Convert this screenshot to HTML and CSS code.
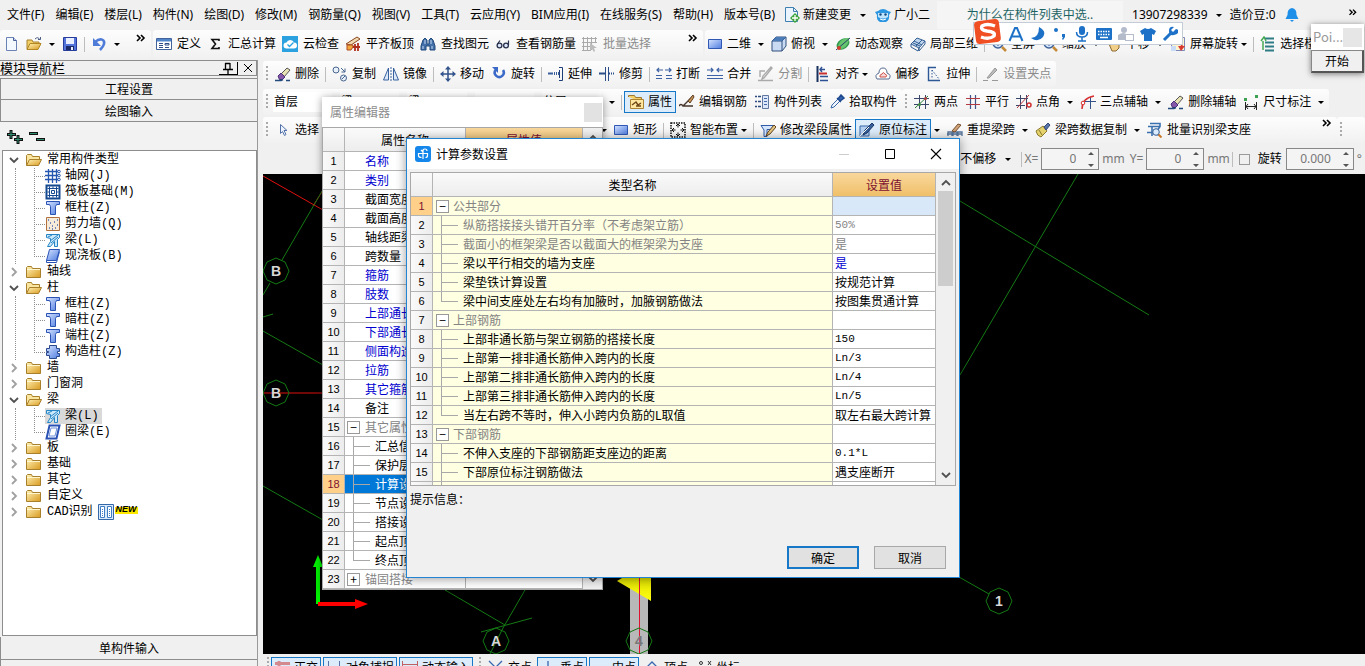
FILE: index.html
```html
<!DOCTYPE html>
<html lang="zh-CN">
<head>
<meta charset="utf-8">
<title>计算参数设置</title>
<link rel="stylesheet" href="styles.css">
</head>
<body>
<svg class="defs" aria-hidden="true">
<defs>
<linearGradient id="gGold" x1="0" y1="0" x2="1" y2="1"><stop offset="0" stop-color="#fff3b8"/><stop offset="1" stop-color="#d99a20"/></linearGradient>
<linearGradient id="gBlue" x1="0" y1="0" x2="1" y2="1"><stop offset="0" stop-color="#d4e3ff"/><stop offset="1" stop-color="#4f7ce0"/></linearGradient>
<linearGradient id="gYel" x1="0" y1="0" x2="0" y2="1"><stop offset="0" stop-color="#dcdc00"/><stop offset="1" stop-color="#ffff10"/></linearGradient>
</defs>
<symbol id="caret" viewBox="0 0 6 16"><path d="M0 7h6L3 10z" fill="#000"/></symbol>
<symbol id="more" viewBox="0 0 10 16"><path d="M1 3l3 3-3 3M5 3l3 3-3 3" fill="none" stroke="#000" stroke-width="1.6"/></symbol>
<symbol id="new" viewBox="0 0 16 16"><path d="M3.500 1.500h7l3 3v10h-10z" fill="#f4f8ff" stroke="#6a82b4"/><path d="M10.500 1.500v3h3" fill="#c5d4f0" stroke="#4a5f96"/></symbol>
<symbol id="open" viewBox="0 0 16 16"><path d="M1 13V4h5l1 2h6v2" fill="#f3cf68" stroke="#a8812c"/><path d="M1 13.500l3-6h11l-3 6z" fill="url(#gGold)" stroke="#b38622"/><path d="M9 3q3-3 5 1M12 3.500h2.500V1" fill="none" stroke="#4b5f86"/></symbol>
<symbol id="save" viewBox="0 0 16 16"><path d="M1.500 1.500h13v13h-13z" fill="#5474dc" stroke="#283c9c"/><path d="M4 2h8v6H4z" fill="#e9efff"/><path d="M4 10h8v4H4z" fill="#1c2a68"/><path d="M9 11h2v3H9z" fill="#e9efff"/></symbol>
<symbol id="undo" viewBox="0 0 16 16"><path d="M4 6c6-5 10-2 9 2-.5 2-2 4-4 6" fill="none" stroke="#4f7cd8" stroke-width="2.600"/><path d="M2 2v8h8z" fill="#4f7cd8"/></symbol>
<symbol id="define" viewBox="0 0 16 16"><path d="M.5 2.500h15v11H.5z" fill="#fff" stroke="#40639c"/><path d="M1 3h14v2.500H1z" fill="#4f84c8"/><path d="M3 7.500h4M3 9.500h4M3 11.500h4M9 7.500h4v1.500H9zM9 11.500h4" fill="none" stroke="#304f88"/></symbol>
<symbol id="sigma" viewBox="0 0 16 16"><path d="M12 5V3.500H5l3.500 4.500L5 12.500h7V11" fill="none" stroke="#111" stroke-width="1.600"/></symbol>
<symbol id="cloud" viewBox="0 0 16 16"><path d="M0 0h16v16H0z" fill="#2ba1e0"/><path d="M4.500 12.500a3 3 0 0 1 0-6 4 4 0 0 1 7.500 0 3 3 0 0 1 0 6z" fill="#fff"/><path d="M5.500 8.500l2 2 4-4" fill="none" stroke="#2ba1e0" stroke-width="1.300"/></symbol>
<symbol id="slab" viewBox="0 0 16 16"><path d="M1 8L12 1l3 2-9 6z" fill="#f0d8b0" stroke="#8a4620"/><path d="M2 9h6v2l-2 3H2z" fill="#f2a83c" stroke="#b04a20"/><path d="M8 11h7M10 8v7M13 7v8" stroke="#b03020" stroke-width="1.800"/></symbol>
<symbol id="find" viewBox="0 0 16 16"><path d="M3 4l2-2 2 2v4h2V4l2-2 2 2 2 6v4h-5v-4H6v4H1v-4z" fill="#426fa8" stroke="#234a7c"/><path d="M3 10v3M12 10v3M5 4v4M11 4v4" stroke="#c8dcf5"/></symbol>
<symbol id="glasses" viewBox="0 0 16 16"><circle cx="4.500" cy="9.500" r="2.400" fill="#dce6f8" stroke="#28324c" stroke-width="1.300"/><circle cx="11" cy="9.500" r="2.400" fill="#dce6f8" stroke="#28324c" stroke-width="1.300"/><path d="M2.500 8L5 4.500M13.500 9V4.500" stroke="#28324c" stroke-width="1.200"/></symbol>
<symbol id="batch" viewBox="0 0 16 16"><path d="M1.500 1v13M5.500 1v13M9.500 1v13M13.500 1v5M0 2.500h15M0 6.500h15M0 10.500h9M0 14.500h9" stroke="#aaa" fill="none"/><path d="M8 7v8l2-2 2 3 1-1-1-3h3z" fill="#bbb"/></symbol>
<symbol id="rect" viewBox="0 0 16 16"><path d="M1.500 3.500h13v9h-13z" fill="url(#gBlue)" stroke="#3057b4"/></symbol>
<symbol id="cube" viewBox="0 0 16 16"><path d="M1 5l4-4h10v9l-4 5H1z" fill="#c9daf3" stroke="#2e4f7c"/><path d="M1 5h10v10M11 5l4-4" fill="none" stroke="#2e4f7c"/><path d="M1 5l4-4h10l-4 4z" fill="#4c7cb8"/></symbol>
<symbol id="orbit" viewBox="0 0 16 16"><ellipse cx="8" cy="8" rx="7" ry="5" transform="rotate(-35 8 8)" fill="#2f9a4c"/><path d="M3 10C5 3 10 2 14 2 14 7 11 12 6 13" fill="#67c46e"/><path d="M1 14L15 2" stroke="#26426c"/><circle cx="4" cy="12" r="2" fill="#d04030"/></symbol>
<symbol id="local" viewBox="0 0 16 16"><path d="M1 8l6-6 8 3-6 7z" fill="#bcd4ee" stroke="#345f92"/><path d="M1 8v3l7 4 1-3M9 12v3l6-7V5M4 5l8 4M6 10l6-6M3 7l7 3" fill="none" stroke="#345f92"/></symbol>
<symbol id="zoom" viewBox="0 0 16 16"><circle cx="7" cy="7" r="5" fill="#cfe3fa" stroke="#3d6199" stroke-width="1.500"/><path d="M11 11l4 4" stroke="#c58a38" stroke-width="2.500"/><path d="M4 7h6M7 4v6" stroke="#3d6199"/></symbol>
<symbol id="hand" viewBox="0 0 16 16"><path d="M3 8l2 1V4q1-2 2 0 1-3 2 0 1-2 2 1 2-1 2 2v5l-3 3H6z" fill="#f2cf88" stroke="#8c6a30"/></symbol>
<symbol id="screen" viewBox="0 0 16 16"><path d="M1.500 1.500h13v13h-13z" fill="#fdf3ce" stroke="#7c89b8"/><path d="M4 4q8-1 8 7" fill="none" stroke="#d83a30" stroke-width="2"/><path d="M8 10h7l-4 5z" fill="#d83a30"/><path d="M1 10h5v5H1z" fill="#c8dcf8"/></symbol>
<symbol id="layers" viewBox="0 0 16 16"><path d="M5 2.500h9M5 6.500h9M5 10.500h9M5 14.500h9" stroke="#2d7c86" stroke-width="2"/><path d="M1 5l3-4 2 4M3 5v9" stroke="#45a854" fill="none" stroke-width="1.500"/></symbol>
<symbol id="erase" viewBox="0 0 16 16"><path d="M6 8l6-6 3 2-6 7z" fill="#e9e3b4" stroke="#555"/><path d="M3 10l3-3 4 4-3 3q-3 1-4-4z" fill="#8557a8" stroke="#4c3078"/><path d="M0 14.500h6l2-1M11 14.500h4" stroke="#234a7c" stroke-width="1.400"/></symbol>
<symbol id="copy" viewBox="0 0 16 16"><circle cx="4" cy="4" r="3" fill="#e8f0fa" stroke="#48658e"/><circle cx="11.500" cy="12" r="3" fill="#e8f0fa" stroke="#48658e"/><path d="M9 2l4 4M13 2.500V6H9.500M10 13l3-3" fill="none" stroke="#48658e"/></symbol>
<symbol id="mirror" viewBox="0 0 16 16"><path d="M5.500 2v12H.5zM10.500 2v12h5z" fill="#dce9f8" stroke="#3a62a0"/><path d="M8 1v14" stroke="#3a62a0" stroke-dasharray="2 1"/></symbol>
<symbol id="move" viewBox="0 0 16 16"><path d="M8 2v12M2 8h12" stroke="#32538c" stroke-width="1.500"/><path d="M8 0l3 3.500H5zM8 16l3-3.500H5zM0 8l3.500-3v6zM16 8l-3.500-3v6z" fill="#32538c"/></symbol>
<symbol id="rot" viewBox="0 0 16 16"><path d="M4.500 4a4.500 4.500 0 1 0 7.500 0" fill="none" stroke="#3c6ac8" stroke-width="2.600"/><path d="M1 1h6v6z" fill="#3c6ac8"/></symbol>
<symbol id="extend" viewBox="0 0 16 16"><path d="M0 7.500h5" stroke="#3a5f9c" stroke-width="2"/><path d="M6 7.500h5" stroke="#3a5f9c" stroke-width="3" stroke-dasharray="1 1"/><path d="M11 1.500h3.500v13H11M11.500 4v8" fill="none" stroke="#1d3d78"/></symbol>
<symbol id="trim" viewBox="0 0 16 16"><path d="M0 7.500h6M10 7.500h1M12 7.500h1M14 7.500h1" stroke="#2c4f8c" stroke-width="2"/><path d="M6.500 1v14M9.500 1v14" stroke="#2c4f8c"/></symbol>
<symbol id="brk" viewBox="0 0 16 16"><path d="M0 12.500h6M10 12.500h6M0 9.500h6M10 9.500h6" stroke="#3c61a4"/><path d="M7 4H1M3 2L1 4l2 2M9 4h6M13 2l2 2-2 2" fill="none" stroke="#3c61a4" stroke-width="1.200"/></symbol>
<symbol id="join" viewBox="0 0 16 16"><path d="M0 12.500h16M0 9.500h16" stroke="#3c61a4"/><path d="M0 4h6M4 2l2 2-2 2M16 4h-6M12 2l-2 2 2 2" fill="none" stroke="#3c61a4" stroke-width="1.200"/></symbol>
<symbol id="split" viewBox="0 0 16 16"><path d="M0 14.500h15M2 11V5h5M14 2L6 12l-2 1 1-3 8-9z" fill="none" stroke="#aaa" stroke-width="1.400"/></symbol>
<symbol id="align" viewBox="0 0 16 16"><path d="M2.500 0v16" stroke="#17305c" stroke-width="2"/><path d="M5 3.500h5M5 10.500h8M5 14.500h8M7 1L5 3.500 7 6" fill="none" stroke="#2d4f94" stroke-width="1.400"/><path d="M4 7.500h8" stroke="#c83030" stroke-width="2"/></symbol>
<symbol id="offset" viewBox="0 0 16 16"><path d="M2 13q-3-4 2-6 0-5 4-5 4 0 4 5 5 2 2 6z" fill="#fff" stroke="#566b90"/><path d="M5 11q-1-2 2-3 1-3 3 0 3 1 1 3z" fill="#f6dada" stroke="#cc5048"/></symbol>
<symbol id="stretch" viewBox="0 0 16 16"><path d="M10 1.500H2.500v13H14" fill="none" stroke="#2e5796" stroke-width="1.400"/><path d="M6 4l7 9M6 4v9" stroke="#2e5796" stroke-dasharray="1.500 1.500"/></symbol>
<symbol id="grip" viewBox="0 0 16 16"><path d="M0 14.500h5M9 14.500h6" stroke="#999"/><path d="M4 12L12 2l2 2-8 8z" fill="#bbb" stroke="#999"/></symbol>
<symbol id="prop" viewBox="0 0 16 16"><path d="M.5 3V1.500h6l1 2h6V8" fill="#f3cf68" stroke="#a07830"/><path d="M2.500 5.500h13v9h-13z" fill="#ffe7a0" stroke="#ac8332"/><path d="M4 11l4-3 2 3 3-2M8 12h5" fill="none" stroke="#704818" stroke-width="1.400"/></symbol>
<symbol id="rebar" viewBox="0 0 16 16"><path d="M0 12q2-3 4 0h10M4 12l10-10" fill="none" stroke="#47362c" stroke-width="1.400"/><path d="M9 7l5-6 1 2-4 6z" fill="#c9965c" stroke="#604020"/></symbol>
<symbol id="list" viewBox="0 0 16 16"><path d="M1 2.500h2M1 7.500h2M1 12.500h2M4 2.500h3M4 7.500h3M4 12.500h3" stroke="#2e4c80" stroke-width="1.600"/><path d="M8.500 1.500h6v13h-6z" fill="#dce8fa" stroke="#6077a0"/><path d="M10 4.500h3M10 7.500h3M10 10.500h3" stroke="#4569a8"/></symbol>
<symbol id="pick" viewBox="0 0 16 16"><path d="M2 14l1-3 6-6 2 2-6 6z" fill="#eff5ff" stroke="#3c68a8"/><path d="M8 4l4 4M9 5l3-4 3 3-4 3z" fill="#3465b0" stroke="#204a90" stroke-width="1.500"/></symbol>
<symbol id="ax2" viewBox="0 0 16 16"><path d="M5.500 1v14M11.500 1v14M0 4.500h15M0 10.500h15" stroke="#3b476a"/><path d="M1 14L14 2" stroke="#2e8038"/><circle cx="5.500" cy="10.500" r="1.500" fill="#3b8a40"/><circle cx="11.500" cy="4.500" r="1.500" fill="#b04040"/></symbol>
<symbol id="axp" viewBox="0 0 16 16"><path d="M5.500 1v14M10.500 1v14" stroke="#3b5588" stroke-width="1.200"/><path d="M1 4.500h14M1 10.500h14" stroke="#b33a40"/></symbol>
<symbol id="axa" viewBox="0 0 16 16"><path d="M4.500 1v14M10.500 1v14M0 4.500h12M0 11.500h9" stroke="#3b476a"/><path d="M1 14L13 1" stroke="#b33a40"/><circle cx="13" cy="11" r="2" fill="none" stroke="#d03030" stroke-width="1.500"/></symbol>
<symbol id="ax3" viewBox="0 0 16 16"><path d="M10.500 3v12M4 7.500h12" stroke="#33538a"/><path d="M2 15Q2 4 14 2" fill="none" stroke="#d83030" stroke-width="1.500"/><circle cx="3" cy="9" r="1.800" fill="#fff" stroke="#d83030"/></symbol>
<symbol id="dim" viewBox="0 0 16 16"><path d="M2.500 8v8M13.500 8v8M2 12.500h12M5 10l-2 2.500L5 15M11 10l2 2.500-2 2.500" fill="none" stroke="#222"/><path d="M1 4h3v3H1zM12 1h3v3h-3z" fill="#3ba050"/></symbol>
<symbol id="cursor" viewBox="0 0 16 16"><path d="M5.500 2.500v9l2-2 2 4 1.500-1-2-4h3z" fill="#eef4ff" stroke="#5572a8"/></symbol>
<symbol id="smart" viewBox="0 0 16 16"><path d="M1 1h14v14H1z" fill="none" stroke="#111" stroke-width="1.500" stroke-dasharray="1.500 1"/><path d="M8 2.500v3M8 10.500v3M2.500 8h3M10.500 8h3M6 4l2-2 2 2M6 12l2 2 2-2M4 6L2 8l2 2M12 6l2 2-2 2" fill="none" stroke="#111"/></symbol>
<symbol id="beamedit" viewBox="0 0 16 16"><path d="M1 3.500h13l-3 4H7v7H4V8z" fill="#d6e6ff" stroke="#2e5ca8"/><path d="M6 14l2-4 6-7 2 2-6 7z" fill="#e5c680" stroke="#5f4220"/></symbol>
<symbol id="insitu" viewBox="0 0 16 16"><path d="M1 4h9v10H1z" fill="#b6d0f2" stroke="#3867a8"/><path d="M4 13l2-5 7-7 2 2-7 8z" fill="#385f98" stroke="#1a3868"/><path d="M1 14L10 5" stroke="#fff"/></symbol>
<symbol id="respan" viewBox="0 0 16 16"><path d="M1 14v-4h4v4M6 14v-4h4v4M11 14v-4h4v4M0 12h15" fill="none" stroke="#567399" stroke-width="1.300"/><path d="M5 9l6-7 3 1-6 7z" fill="#cfa277" stroke="#7a5130"/></symbol>
<symbol id="brush" viewBox="0 0 16 16"><path d="M1 9l7-5 4 5-6 6q-4-1-5-6z" fill="#e5d26c" stroke="#8a7a30"/><path d="M9 5l4-4 2 2-4 5z" fill="#5975a8" stroke="#334a78"/><path d="M4 8l3 5" stroke="#8a7a30"/></symbol>
<symbol id="recog" viewBox="0 0 16 16"><path d="M1 4.500h12M3 1.500h10v3l-2 3v6M5 5v9M0 10.500h7" fill="none" stroke="#3a70ae" stroke-width="1.600"/><circle cx="9" cy="10" r="3.300" fill="#d9ebff" stroke="#335c94"/><path d="M11.500 12.500l3 3" stroke="#c87828" stroke-width="2"/></symbol>
<symbol id="newdoc" viewBox="0 0 16 16"><path d="M1.500.5h8l4 4v10h-12z" fill="#eaf4fc" stroke="#3f80b0"/><path d="M9.500.5v4h4" fill="none" stroke="#3f80b0"/><path d="M11 6l5 5-5 5-5-5z" fill="#3da53c"/><path d="M11 8v6M8 11h6" stroke="#fff" stroke-width="1.300"/></symbol>
<symbol id="face" viewBox="0 0 16 16"><path d="M0 5l3-1q5-4 10 0l3 1-2 3q1 5-3 7H5q-4-2-3-7z" fill="#2a95e0"/><path d="M3 6h10v4q-5 3-10 0z" fill="#bfe4fb"/><circle cx="5.500" cy="7.500" r="1.200" fill="#124a80"/><circle cx="10.500" cy="7.500" r="1.200" fill="#124a80"/><path d="M5 12q3 2 6 0" stroke="#fff" fill="none"/></symbol>
<symbol id="bell" viewBox="0 0 16 16"><path d="M8 1q5 1 4.500 7l2 4h-13l2-4Q3 2 8 1z" fill="#1e8fe8"/><path d="M6 13h4l-2 2z" fill="#1e8fe8"/></symbol>
<symbol id="fold" viewBox="0 0 16 16"><path d="M.5 13.500v-10l1-1h4l1 2h8v9z" fill="url(#gGold)" stroke="#a87f2a"/><path d="M1 5.500h13" stroke="#fff6cf"/></symbol>
<symbol id="foldo" viewBox="0 0 16 16"><path d="M.5 13.500v-10l1-1h4l1 2h7v3" fill="#fae6a0" stroke="#a87f2a"/><path d="M.5 13.500l3-6h12l-3 6z" fill="url(#gGold)" stroke="#a87f2a"/></symbol>
<symbol id="grid" viewBox="0 0 16 16"><path d="M3.500 1v14M7.500 1v14M11.500 1v14M0 3.500h13M0 7.500h13M0 11.500h13" stroke="#2456b0" stroke-width="1.300"/><circle cx="14" cy="3.500" r="1.300" fill="none" stroke="#2456b0"/><circle cx="14" cy="7.500" r="1.300" fill="none" stroke="#2456b0"/><circle cx="14" cy="11.500" r="1.300" fill="none" stroke="#2456b0"/></symbol>
<symbol id="raft" viewBox="0 0 16 16"><path d="M1.500 1.500h13v13h-13z" fill="#fff" stroke="#154a90" stroke-width="2"/><path d="M4.500 2.500v11M11.500 2.500v11M2.500 4.500h11M2.500 11.500h11M6.500 6.500h3v3h-3zM8 2.500v2M8 11.500v2M2.500 8h2M11.500 8h2" fill="none" stroke="#154a90"/></symbol>
<symbol id="col" viewBox="0 0 16 16"><path d="M1.500 1.500h13v3h-3l-1 2v8h-5v-8l-1-2h-3z" fill="url(#gBlue)" stroke="#2a52b4"/></symbol>
<symbol id="wall" viewBox="0 0 16 16"><path d="M1.500 1.500h13v13h-13z" fill="#f6ead9" stroke="#b07040"/><path d="M4 12h1M7 10h1M10 12h1M5 7h1M9 6h1M12 9h1M3 4h1M12 4h1M7 13h1" stroke="#4868b0" stroke-width="1.400"/></symbol>
<symbol id="beam" viewBox="0 0 16 16"><path d="M1.500 2.500h13v3l-2 2v7h-3v-5l-4 5h-3l3-5v-3l-4-1z" fill="#cbe8fb" stroke="#2584c4"/><path d="M5 9l8-6M6 11l7-6M3 5l4-2" stroke="#2584c4"/></symbol>
<symbol id="plate" viewBox="0 0 16 16"><path d="M4.500 1.500h10l-3 11h-10z" fill="url(#gBlue)" stroke="#2a52b4"/><path d="M1.500 12.500v2h10l3-11" fill="none" stroke="#2a52b4"/></symbol>
<symbol id="gz" viewBox="0 0 16 16"><path d="M4.500 1.500h7v3h3v3h-2v2h2v3h-3v2h-7v-3h-3v-3h2v-1h-2v-3h3z" fill="url(#gBlue)" stroke="#29488c"/></symbol>
<symbol id="ring" viewBox="0 0 16 16"><path d="M4.500 1.500h10l-3 13h-10z" fill="#fff" stroke="#2a52b4" stroke-width="2"/><path d="M6 4h6l-2 8H4z" fill="none" stroke="#6c90dc"/></symbol>
<symbol id="up" viewBox="0 0 10 10"><path d="M1 7l4-4 4 4" fill="none" stroke="#505050" stroke-width="1.800"/></symbol>
<symbol id="down" viewBox="0 0 10 10"><path d="M1 3l4 4 4-4" fill="none" stroke="#505050" stroke-width="1.800"/></symbol>
<symbol id="right" viewBox="0 0 10 10"><path d="M3 1l4 4-4 4" fill="none" stroke="#a0a0a0" stroke-width="1.800"/></symbol>
<symbol id="spin" viewBox="0 0 6 18"><path d="M0 5h6L3 2zM0 14h6l-3 3z" fill="#555"/></symbol>
<symbol id="ortho" viewBox="0 0 16 16"><path d="M1 3.500h15M5 1v15" stroke="#d06060" stroke-width="3" opacity=".7"/></symbol>
<symbol id="snap" viewBox="0 0 16 16"><path d="M2.500 1v13h11V1" fill="none" stroke="#5674a8"/></symbol>
<symbol id="dyn" viewBox="0 0 16 16"><path d="M.5 1v13M15.500 1v13M1 4.500h14" fill="none" stroke="#c06060"/></symbol>
<symbol id="cross" viewBox="0 0 16 16"><path d="M1 1l13 13M14 1L1 14" stroke="#3866b0" stroke-width="1.300"/></symbol>
<symbol id="perp" viewBox="0 0 16 16"><path d="M8 1v12M1 13.500h14" stroke="#3866b0" stroke-width="1.300"/></symbol>
<symbol id="mid" viewBox="0 0 16 16"><path d="M1 8.500h14M8 6v5" stroke="#3866b0" stroke-width="1.300"/></symbol>
<symbol id="vert" viewBox="0 0 16 16"><path d="M1 9l7-7 7 7" fill="none" stroke="#3866b0" stroke-width="1.300"/></symbol>
<symbol id="coord" viewBox="0 0 16 16"><circle cx="5" cy="3" r="1.500" fill="none" stroke="#333"/><path d="M12 1l3 4M15 1l-3 4M1 8h3M9 8h3" stroke="#333"/></symbol>
</svg>

<div class="app">
  <header class="menubar">
    <nav class="menus">
      <button>文件(F)</button><button>编辑(E)</button><button>楼层(L)</button><button>构件(N)</button><button>绘图(D)</button><button>修改(M)</button><button>钢筋量(Q)</button><button>视图(V)</button><button>工具(T)</button><button>云应用(Y)</button><button>BIM应用(I)</button><button>在线服务(S)</button><button>帮助(H)</button><button>版本号(B)</button>
    </nav>
    <button class="tool"><svg class="ic"><use href="#newdoc"/></svg>新建变更</button><svg class="caret"><use href="#caret"/></svg>
    <button class="tool"><svg class="ic"><use href="#face"/></svg>广小二</button>
    <a class="tip-link" href="#">为什么在构件列表中选..</a>
    <div class="account">
      <button>13907298339</button><svg class="caret"><use href="#caret"/></svg>
      <button>造价豆:0</button><svg class="ic"><use href="#bell"/></svg>
    </div>
    <svg class="more"><use href="#more"/></svg>
  </header>

  <div class="toprow">
    <div class="bar file-bar">
      <button class="tool" aria-label="新建"><svg class="ic"><use href="#new"/></svg></button>
      <button class="tool" aria-label="打开"><svg class="ic"><use href="#open"/></svg></button><svg class="caret"><use href="#caret"/></svg>
      <button class="tool" aria-label="保存"><svg class="ic"><use href="#save"/></svg></button><i class="sep"></i>
      <button class="tool" aria-label="撤销"><svg class="ic"><use href="#undo"/></svg></button><svg class="caret"><use href="#caret"/></svg>
      <svg class="more"><use href="#more"/></svg>
    </div>
    <div class="bar main-bar">
      <button class="tool"><svg class="ic"><use href="#define"/></svg>定义</button>
      <button class="tool"><svg class="ic"><use href="#sigma"/></svg>汇总计算</button>
      <button class="tool"><svg class="ic"><use href="#cloud"/></svg>云检查</button>
      <button class="tool"><svg class="ic"><use href="#slab"/></svg>平齐板顶</button>
      <button class="tool"><svg class="ic"><use href="#find"/></svg>查找图元</button>
      <button class="tool"><svg class="ic"><use href="#glasses"/></svg>查看钢筋量</button>
      <button class="tool" disabled><svg class="ic"><use href="#batch"/></svg>批量选择</button>
      <svg class="more"><use href="#more"/></svg>
    </div>
    <div class="bar view-bar">
      <button class="tool"><svg class="ic"><use href="#rect"/></svg>二维</button><svg class="caret"><use href="#caret"/></svg>
      <button class="tool"><svg class="ic"><use href="#cube"/></svg>俯视</button><svg class="caret"><use href="#caret"/></svg>
      <button class="tool"><svg class="ic"><use href="#orbit"/></svg>动态观察</button>
      <button class="tool"><svg class="ic"><use href="#local"/></svg>局部三维</button><i class="sep"></i>
      <button class="tool"><svg class="ic"><use href="#zoom"/></svg>全屏</button>
      <button class="tool"><svg class="ic"><use href="#zoom"/></svg>缩放</button><svg class="caret"><use href="#caret"/></svg>
      <button class="tool"><svg class="ic"><use href="#hand"/></svg>平移</button><svg class="caret"><use href="#caret"/></svg>
      <button class="tool"><svg class="ic"><use href="#screen"/></svg>屏幕旋转<svg class="caret"><use href="#caret"/></svg></button><i class="sep"></i>
      <button class="tool"><svg class="ic"><use href="#layers"/></svg>选择楼层</button>
    </div>
  </div>

  <div class="workspace">
    <aside class="side">
      <div class="side-title"><span>模块导航栏</span>
        <button class="pin" aria-label="固定"><svg viewBox="0 0 12 12"><path d="M3.500 1v6M8 1v6M3 1.500h5M1 7.500h10M6 8v4" fill="none" stroke="#000" stroke-width="1.300"/></svg></button>
        <button class="shut" aria-label="关闭"><svg viewBox="0 0 12 12"><path d="M2 2l8 8M10 2l-8 8" stroke="#000"/></svg></button>
      </div>
      <button class="side-tab">工程设置</button>
      <button class="side-tab">绘图输入</button>
      <div class="expanders">
        <svg viewBox="0 0 42 16"><path d="M5 1v9M1 5.500h9M12 6v9M8 10.500h9M23 4.500h9M30 10.500h9" stroke="#111" stroke-width="3"/><path d="M5 2v7M2 5.500h7M12 7v7M9 10.500h7M24 4.500h7M31 10.500h7" stroke="#2f8f70"/></svg>
      </div>
      <ul class="tree">
        <li><div class="node"><svg class="tw"><use href="#down"/></svg><svg class="ic"><use href="#foldo"/></svg>常用构件类型</div>
          <ul>
            <li><svg class="ic"><use href="#grid"/></svg><span>轴网(J)</span></li>
            <li><svg class="ic"><use href="#raft"/></svg><span>筏板基础(M)</span></li>
            <li><svg class="ic"><use href="#col"/></svg><span>框柱(Z)</span></li>
            <li><svg class="ic"><use href="#wall"/></svg><span>剪力墙(Q)</span></li>
            <li><svg class="ic"><use href="#beam"/></svg><span>梁(L)</span></li>
            <li><svg class="ic"><use href="#plate"/></svg><span>现浇板(B)</span></li>
          </ul></li>
        <li><div class="node"><svg class="tw"><use href="#right"/></svg><svg class="ic"><use href="#fold"/></svg>轴线</div></li>
        <li><div class="node"><svg class="tw"><use href="#down"/></svg><svg class="ic"><use href="#foldo"/></svg>柱</div>
          <ul>
            <li><svg class="ic"><use href="#col"/></svg><span>框柱(Z)</span></li>
            <li><svg class="ic"><use href="#col"/></svg><span>暗柱(Z)</span></li>
            <li><svg class="ic"><use href="#col"/></svg><span>端柱(Z)</span></li>
            <li><svg class="ic"><use href="#gz"/></svg><span>构造柱(Z)</span></li>
          </ul></li>
        <li><div class="node"><svg class="tw"><use href="#right"/></svg><svg class="ic"><use href="#fold"/></svg>墙</div></li>
        <li><div class="node"><svg class="tw"><use href="#right"/></svg><svg class="ic"><use href="#fold"/></svg>门窗洞</div></li>
        <li><div class="node"><svg class="tw"><use href="#down"/></svg><svg class="ic"><use href="#foldo"/></svg>梁</div>
          <ul>
            <li class="picked"><svg class="ic"><use href="#beam"/></svg><span>梁(L)</span></li>
            <li><svg class="ic"><use href="#ring"/></svg><span>圈梁(E)</span></li>
          </ul></li>
        <li><div class="node"><svg class="tw"><use href="#right"/></svg><svg class="ic"><use href="#fold"/></svg>板</div></li>
        <li><div class="node"><svg class="tw"><use href="#right"/></svg><svg class="ic"><use href="#fold"/></svg>基础</div></li>
        <li><div class="node"><svg class="tw"><use href="#right"/></svg><svg class="ic"><use href="#fold"/></svg>其它</div></li>
        <li><div class="node"><svg class="tw"><use href="#right"/></svg><svg class="ic"><use href="#fold"/></svg>自定义</div></li>
        <li><div class="node"><svg class="tw"><use href="#right"/></svg><svg class="ic"><use href="#fold"/></svg>CAD识别
          <svg class="ic" viewBox="0 0 16 16"><path d="M.5.5h15v15H.5z" fill="#d8eafa" stroke="#3468a8"/><path d="M2.500 2.500h4v11h-4zM9.500 2.500h4v11h-4z" fill="#fff" stroke="#3f7cc4"/><path d="M4.500 5v7M11.500 5v7" stroke="#3f7cc4" stroke-dasharray="1 1"/></svg><em class="new">NEW</em></div></li>
      </ul>
      <button class="side-tab">单构件输入</button>
      <button class="side-tab">报表预览</button>
    </aside>

    <main class="stage">
      <div class="strip"><div class="bar">
        <i class="hold"></i>
        <button class="tool"><svg class="ic"><use href="#erase"/></svg>删除</button><i class="sep"></i>
        <button class="tool"><svg class="ic"><use href="#copy"/></svg>复制</button>
        <button class="tool"><svg class="ic"><use href="#mirror"/></svg>镜像</button><i class="sep"></i>
        <button class="tool"><svg class="ic"><use href="#move"/></svg>移动</button>
        <button class="tool"><svg class="ic"><use href="#rot"/></svg>旋转</button><i class="sep"></i>
        <button class="tool"><svg class="ic"><use href="#extend"/></svg>延伸</button>
        <button class="tool"><svg class="ic"><use href="#trim"/></svg>修剪</button><i class="sep"></i>
        <button class="tool"><svg class="ic"><use href="#brk"/></svg>打断</button>
        <button class="tool"><svg class="ic"><use href="#join"/></svg>合并</button>
        <button class="tool" disabled><svg class="ic"><use href="#split"/></svg>分割</button><i class="sep"></i>
        <button class="tool"><svg class="ic"><use href="#align"/></svg>对齐<svg class="caret"><use href="#caret"/></svg></button>
        <button class="tool"><svg class="ic"><use href="#offset"/></svg>偏移</button>
        <button class="tool"><svg class="ic"><use href="#stretch"/></svg>拉伸</button><i class="sep"></i>
        <button class="tool" disabled><svg class="ic"><use href="#grip"/></svg>设置夹点</button>
      </div></div>

      <div class="strip"><div class="bar">
        <i class="hold"></i>
        <div class="fields">
          <select class="pick" aria-label="楼层"><option>首层</option></select>
          <select class="pick" aria-label="构件大类"><option>梁</option></select>
          <select class="pick" aria-label="构件类型"><option>梁</option></select>
          <select class="pick" aria-label="构件"><option>KL-1(1)</option></select>
          <select class="pick" aria-label="分层"><option>分层1</option></select>
          <svg class="caret"><use href="#caret"/></svg>
        </div><i class="sep"></i>
        <button class="tool on"><svg class="ic"><use href="#prop"/></svg>属性</button>
        <button class="tool"><svg class="ic"><use href="#rebar"/></svg>编辑钢筋</button>
        <button class="tool"><svg class="ic"><use href="#list"/></svg>构件列表</button>
        <button class="tool"><svg class="ic"><use href="#pick"/></svg>拾取构件</button>
      </div><div class="bar">
        <i class="hold"></i>
        <button class="tool"><svg class="ic"><use href="#ax2"/></svg>两点</button>
        <button class="tool"><svg class="ic"><use href="#axp"/></svg>平行</button>
        <button class="tool"><svg class="ic"><use href="#axa"/></svg>点角</button><svg class="caret"><use href="#caret"/></svg>
        <button class="tool"><svg class="ic"><use href="#ax3"/></svg>三点辅轴</button><svg class="caret"><use href="#caret"/></svg>
        <button class="tool"><svg class="ic"><use href="#erase"/></svg>删除辅轴</button>
        <button class="tool"><svg class="ic"><use href="#dim"/></svg>尺寸标注</button><svg class="caret"><use href="#caret"/></svg>
      </div></div>

      <div class="strip"><div class="bar grow">
        <i class="hold"></i>
        <div class="draw"><button class="tool"><svg class="ic"><use href="#cursor"/></svg>选择</button><svg class="caret"><use href="#caret"/></svg></div>
        <button class="tool"><svg class="ic"><use href="#rect"/></svg>矩形</button><i class="sep"></i>
        <button class="tool"><svg class="ic"><use href="#smart"/></svg>智能布置<svg class="caret"><use href="#caret"/></svg></button><i class="sep"></i>
        <button class="tool"><svg class="ic"><use href="#beamedit"/></svg>修改梁段属性</button>
        <button class="tool on"><svg class="ic"><use href="#insitu"/></svg>原位标注</button><svg class="caret"><use href="#caret"/></svg>
        <button class="tool"><svg class="ic"><use href="#respan"/></svg>重提梁跨</button><svg class="caret"><use href="#caret"/></svg>
        <button class="tool"><svg class="ic"><use href="#brush"/></svg>梁跨数据复制</button><svg class="caret"><use href="#caret"/></svg>
        <button class="tool"><svg class="ic"><use href="#recog"/></svg>批量识别梁支座</button>
        <svg class="more"><use href="#more"/></svg>
      </div><div class="bar stub"><i class="hold"></i></div></div>

      <div class="strip offsets">
        <button>不偏移</button><svg class="caret wide"><use href="#caret"/></svg><i class="sep"></i>
        <label for="dx">X=</label><span class="num"><input id="dx" value="0"><svg><use href="#spin"/></svg></span><span>mm</span>
        <label for="dy" class="dy">Y=</label><span class="num"><input id="dy" value="0"><svg><use href="#spin"/></svg></span><span>mm</span><i class="sep"></i>
        <label class="check"><input type="checkbox"><span>旋转</span></label><span class="num angle"><input aria-label="旋转角度" value="0.000"><svg><use href="#spin"/></svg></span><span>°</span>
      </div>

      <div class="canvas">
        <svg class="drawing">
          <g transform="translate(-263 -174)" fill="none">
            <g stroke="#e01010"><path d="M263 176l60 34M313 206l12-19M263 393h60"/></g>
            <g stroke="#147a14">
              <path d="M282 260l43-74M270 283l-7 12M263 317l10-3M263 331l60 34M263 486l60 34M445 590l60 35M525 590l-22 38-13 26M481 632l51-14M960 201l189 114M1078 174l-118 201M959 577l30 17"/>
              <path d="M276 258l9 4 4 9-4 9-9 4-9-4-4-9 4-9zM276 380l9 4 4 9-4 9-9 4-9-4-4-9 4-9z"/>
              <path d="M496 628l9 4 4 9-4 9-9 4-9-4-4-9 4-9zM999 588l9 4 4 9-4 9-9 4-9-4-4-9 4-9z"/>
            </g>
            <path d="M630 560h18v94h-18z" fill="#b8b8b8"/>
            <path d="M617 581l10-6h24v26z" fill="url(#gYel)"/>
            <path d="M639.500 574v80" stroke="#e01030"/>
            <path d="M639 628l9 4 4 9-4 9-9 4-9-4-4-9 4-9z" stroke="#147a14"/>
            <path d="M318 604v-40" stroke="#00f000" stroke-width="4"/><path d="M318 555l5 12h-10z" fill="#00f000"/>
            <path d="M318 604h40" stroke="#f00" stroke-width="4"/><path d="M368 604l-13 5v-10z" fill="#f00"/>
            <g class="bubble"><text x="276" y="276">B</text><text x="276" y="398">B</text><text x="496" y="646">A</text><text x="999" y="606">1</text><text x="639" y="646" class="dim">4</text></g>
          </g>
        </svg>
      </div>

      <footer class="status">
        <i class="hold"></i>
        <button class="tool on"><svg class="ic"><use href="#ortho"/></svg>正交</button>
        <button class="tool on"><svg class="ic"><use href="#snap"/></svg>对象捕捉</button>
        <button class="tool on"><svg class="ic"><use href="#dyn"/></svg>动态输入</button>
        <i class="hold"></i>
        <button class="tool"><svg class="ic"><use href="#cross"/></svg>交点</button>
        <button class="tool on"><svg class="ic"><use href="#perp"/></svg>垂点</button>
        <button class="tool on"><svg class="ic"><use href="#mid"/></svg>中点</button>
        <button class="tool"><svg class="ic"><use href="#vert"/></svg>顶点</button>
        <button class="tool"><svg class="ic"><use href="#coord"/></svg>坐标</button>
      </footer>
    </main>
  </div>

  <section class="win props" aria-label="属性编辑器">
    <div class="win-title"><h2>属性编辑器</h2><button class="ghost" aria-label="关闭"></button></div>
    <div class="sheet">
      <table>
        <colgroup><col class="c-no"><col class="c-name"><col></colgroup>
        <thead><tr><th></th><th>属性名称</th><th class="gold">属性值</th></tr></thead>
        <tbody>
          <tr><th>1</th><td class="key">名称</td><td></td></tr>
          <tr><th>2</th><td class="key">类别</td><td></td></tr>
          <tr><th>3</th><td>截面宽度(mm)</td><td></td></tr>
          <tr><th>4</th><td>截面高度(mm)</td><td></td></tr>
          <tr><th>5</th><td>轴线距梁左边线</td><td></td></tr>
          <tr><th>6</th><td>跨数量</td><td></td></tr>
          <tr><th>7</th><td class="key">箍筋</td><td></td></tr>
          <tr><th>8</th><td class="key">肢数</td><td></td></tr>
          <tr><th>9</th><td class="key">上部通长筋</td><td></td></tr>
          <tr><th>10</th><td class="key">下部通长筋</td><td></td></tr>
          <tr><th>11</th><td class="key">侧面构造或受扭</td><td></td></tr>
          <tr><th>12</th><td class="key">拉筋</td><td></td></tr>
          <tr><th>13</th><td class="key">其它箍筋</td><td></td></tr>
          <tr><th>14</th><td>备注</td><td></td></tr>
          <tr><th>15</th><td class="group"><button class="box" aria-label="折叠">−</button>其它属性</td><td></td></tr>
          <tr><th>16</th><td class="sub">汇总信息</td><td></td></tr>
          <tr><th>17</th><td class="sub">保护层厚度</td><td></td></tr>
          <tr class="current"><th>18</th><td class="sub">计算设置</td><td></td></tr>
          <tr><th>19</th><td class="sub">节点设置</td><td></td></tr>
          <tr><th>20</th><td class="sub">搭接设置</td><td></td></tr>
          <tr><th>21</th><td class="sub">起点顶标高</td><td></td></tr>
          <tr><th>22</th><td class="sub last">终点顶标高</td><td></td></tr>
          <tr><th>23</th><td class="group"><button class="box" aria-label="展开">+</button>锚固搭接</td><td></td></tr>
        </tbody>
      </table>
      <div class="scroll"><svg><use href="#up"/></svg><svg><use href="#down"/></svg></div>
    </div>
  </section>

  <section class="win dialog" role="dialog" aria-label="计算参数设置">
    <div class="win-title">
      <svg class="logo" viewBox="0 0 16 16"><rect width="16" height="16" rx="3" fill="#1687ea"/><path d="M3 7.500h10M8 13V5q0-2 2-2t2 2M6 4L8 6M3.500 7.500v2q0 2 3 2M12.500 7.500v2q0 2-2 2" fill="none" stroke="#fff" stroke-width="1.200"/></svg>
      <h2>计算参数设置</h2>
      <button aria-label="最小化"><svg viewBox="0 0 12 12"><path d="M1 6.500h10" stroke="#ccc"/></svg></button>
      <button aria-label="最大化"><svg viewBox="0 0 12 12"><path d="M1.500 1.500h9v9h-9z" fill="none" stroke="#000"/></svg></button>
      <button aria-label="关闭"><svg viewBox="0 0 12 12"><path d="M1 1l10 10M11 1L1 11" stroke="#000" stroke-width="1.100"/></svg></button>
    </div>
    <div class="sheet">
      <table>
        <colgroup><col class="c-no"><col><col class="c-val"></colgroup>
        <thead><tr><th></th><th>类型名称</th><th class="gold">设置值</th></tr></thead>
        <tbody>
          <tr class="current"><th>1</th><td class="group"><button class="box" aria-label="折叠">−</button>公共部分</td><td></td></tr>
          <tr class="off"><th>2</th><td class="sub">纵筋搭接接头错开百分率（不考虑架立筋）</td><td class="lat">50%</td></tr>
          <tr class="off"><th>3</th><td class="sub">截面小的框架梁是否以截面大的框架梁为支座</td><td>是</td></tr>
          <tr><th>4</th><td class="sub">梁以平行相交的墙为支座</td><td class="key">是</td></tr>
          <tr><th>5</th><td class="sub">梁垫铁计算设置</td><td>按规范计算</td></tr>
          <tr><th>6</th><td class="sub last">梁中间支座处左右均有加腋时，加腋钢筋做法</td><td>按图集贯通计算</td></tr>
          <tr><th>7</th><td class="group"><button class="box" aria-label="折叠">−</button>上部钢筋</td><td></td></tr>
          <tr><th>8</th><td class="sub">上部非通长筋与架立钢筋的搭接长度</td><td class="lat">150</td></tr>
          <tr><th>9</th><td class="sub">上部第一排非通长筋伸入跨内的长度</td><td class="lat">Ln/3</td></tr>
          <tr><th>10</th><td class="sub">上部第二排非通长筋伸入跨内的长度</td><td class="lat">Ln/4</td></tr>
          <tr><th>11</th><td class="sub">上部第三排非通长筋伸入跨内的长度</td><td class="lat">Ln/5</td></tr>
          <tr><th>12</th><td class="sub last">当左右跨不等时，伸入小跨内负筋的L取值</td><td>取左右最大跨计算</td></tr>
          <tr><th>13</th><td class="group"><button class="box" aria-label="折叠">−</button>下部钢筋</td><td></td></tr>
          <tr><th>14</th><td class="sub">不伸入支座的下部钢筋距支座边的距离</td><td class="lat">0.1*L</td></tr>
          <tr><th>15</th><td class="sub">下部原位标注钢筋做法</td><td>遇支座断开</td></tr>
          <tr><th></th><td class="sub"></td><td></td></tr>
        </tbody>
      </table>
      <div class="scroll"><svg><use href="#up"/></svg><i class="thumb"></i><svg><use href="#down"/></svg></div>
    </div>
    <p class="hint">提示信息：</p>
    <div class="actions"><button class="primary">确定</button><button>取消</button></div>
  </section>

  <div class="ime">
    <svg class="sogou" viewBox="0 0 28 26"><rect x="1" y="1" width="25" height="23" rx="4" transform="rotate(-7 14 13)" fill="#f04e23"/><path d="M21 7q-8-3-13 0-2 4 5 5 9 1 7 5-5 4-13 1" fill="none" stroke="#fff" stroke-width="3.400"/></svg>
    <svg viewBox="0 0 16 16"><path d="M1.500 15L7 2h2l5.500 13M4 10.500h8" fill="none" stroke="#1d72c8" stroke-width="2"/></svg>
    <svg viewBox="0 0 16 16"><path d="M9 1q8 4 4 10-5 6-12 1 8 0 8-11z" fill="#1d72c8"/></svg>
    <svg viewBox="0 0 16 16"><circle cx="4" cy="4" r="2" fill="#1d72c8"/><path d="M10 8h3v3l-2 3-1-1 1-2h-1z" fill="#1d72c8"/></svg>
    <svg viewBox="0 0 16 16"><rect x="5" y="0" width="6" height="9" rx="3" fill="#1d72c8"/><path d="M2.500 6q0 5 5.500 5t5.500-5M8 11v4M4 15h8" fill="none" stroke="#1d72c8" stroke-width="1.500"/></svg>
    <svg viewBox="0 0 16 16"><rect x="0" y="2" width="16" height="12" rx="1" fill="#1d72c8"/><path d="M2 5.500h12M2 8.500h12" stroke="#fff" stroke-width="1.500" stroke-dasharray="1.500 1"/><path d="M4 11.500h8" stroke="#fff" stroke-width="1.500"/></svg>
    <svg viewBox="0 0 16 16"><circle cx="6" cy="4" r="3" fill="#b4bccb"/><path d="M0 14V9q6-4 9 0v5z" fill="#b4bccb"/><rect x="7.500" y="8.500" width="8" height="6" fill="#fff" stroke="#b4bccb"/></svg>
    <svg viewBox="0 0 16 16"><path d="M5 2q3 2 6 0l5 3-2 4-2-1v7H4V8L2 9 0 5z" fill="#1d72c8"/></svg>
    <svg viewBox="0 0 16 16"><path d="M2 14l7-7" stroke="#1d72c8" stroke-width="3"/><path d="M14 3l-3 3-2-2 3-3q-5-1-5 4t5 4 5-5z" fill="#1d72c8"/></svg>
  </div>

  <section class="mini"><div class="mini-title"><span>Poi...</span><i></i></div><button>开始</button></section>
</div>
</body>
</html>
```
FILE: styles.css
```css
* { box-sizing: border-box; }
body {
  margin: 0;
  font: 12px/16px "Noto Sans", "Noto Sans CJK SC", sans-serif;
  color: #000;
  background: #f0f0f0;
}
button, input, select { font: inherit; color: inherit; margin: 0; }
button { padding: 0; border: 0; background: none; white-space: nowrap; }
h2, p, ul { margin: 0; padding: 0; font-size: 12px; font-weight: 400; }
ul { list-style: none; }
svg { flex: none; display: block; }
.defs { position: absolute; width: 0; height: 0; }
.app {
  position: relative;
  display: flex;
  flex-direction: column;
  height: 100vh;
  overflow: hidden;
}

/* toolbars */
.ic { width: 16px; height: 16px; }
.caret { width: 6px; height: 16px; }
.more { width: 10px; height: 16px; margin-left: auto; align-self: flex-start; }
.sep { flex: none; width: 1px; height: 15px; margin: 0 -1px; background: #bdbdbd; }
.hold { flex: none; width: 2px; height: 16px; background: repeating-linear-gradient(#aaa 0 2px, transparent 2px 4px); }
.bar {
  display: flex;
  align-items: center;
  gap: 7px;
  height: 28px;
  padding: 0 5px 0 3px;
  border-radius: 3px;
  background: linear-gradient(#fdfdfd, #f1f1f1);
}
.tool { display: flex; align-items: center; gap: 4px; flex: none; height: 22px; }
.tool .caret { margin-left: -1px; }
.tool:disabled { color: #8c8c8c; }
.tool.on { margin: 0 -4px; padding: 0 3px; border: 1px solid #1878c8; background: #dcecfa; }

.menubar { display: flex; align-items: center; gap: 9px; height: 30px; padding: 0 7px; }
.menus { display: flex; gap: 11px; }
.menubar .tool { gap: 3px; }
.tip-link {
  width: 186px;
  margin-left: -2px;
  line-height: 28px;
  text-align: center;
  text-decoration: none;
  color: #1c6464;
  background: #f5f5f5;
}
.account { display: flex; align-items: center; gap: 8px; }
.menubar .more { align-self: center; padding-bottom: 2px; }

.toprow { display: grid; grid-template-columns: 151px 550px 1fr; column-gap: 2px; height: 30px; }
.toprow .more { margin-top: 2px; }
.main-bar { gap: 6px; }
.main-bar .tool { gap: 5px; }
.view-bar { overflow: hidden; padding-left: 2px; }

.workspace { flex: 1; min-height: 0; display: grid; grid-template-columns: 258px 1fr; column-gap: 5px; }

/* navigation panel */
.side { display: flex; flex-direction: column; min-height: 0; overflow: hidden; border-right: 1px solid #9a9a9a; font-family: "Noto Sans CJK SC", sans-serif; }
.side-title { display: flex; align-items: center; flex: none; height: 16px; border: 1px solid #8d8d8d; border-left: 0; font-size: 13px; }
.side-title span { flex: 1; }
.side-title svg { width: 12px; height: 12px; }
.pin { padding: 0 3px; margin-right: 4px; border-right: 1px solid #000; border-bottom: 1px solid #000; }
.shut { margin-right: 2px; }
.side-tab { flex: none; height: 22px; border: solid #8d8d8d; border-width: 0 0 1px 1px; background: #f0f0f0; }
.side-title + .side-tab { margin-top: 2px; border-top: 1px solid #8d8d8d; }
.expanders { flex: none; height: 28px; padding: 7px 6px; background: #f2f2f2; }
.expanders svg { width: 42px; height: 16px; }
.tree { flex: 1; min-height: 0; margin-left: 2px; padding-top: 1px; border: 1px solid #8d8d8d; background: #fff; font-family: "Liberation Mono", "Noto Sans CJK SC", monospace; }
.tree + .side-tab { height: 23px; margin-top: 1px; }
.tree + .side-tab + .side-tab { margin-bottom: -16px; padding-top: 4px; }
.node { display: flex; align-items: center; gap: 5px; height: 16px; padding-left: 6px; white-space: nowrap; }
.tw { width: 10px; height: 10px; margin-right: 2px; }
.tree ul { margin-left: 12px; border-left: 1px dotted #909090; }
.tree ul li { display: flex; align-items: center; height: 16px; margin-left: 18px; background: repeating-linear-gradient(90deg, #909090 0 1px, transparent 1px 2px) 0 8px / 11px 1px no-repeat, repeating-linear-gradient(#909090 0 1px, transparent 1px 2px) 0 0 / 1px 100% no-repeat; padding-left: 11px; }
.tree ul li:last-child { background-size: 11px 1px, 1px 8px; }
.tree ul span { padding: 0 3px 0 4px; line-height: 16px; }
.tree .picked span, .tree .picked .ic { background: #d9d9d9; }
.new { align-self: flex-start; padding: 0 1px; font: italic 700 9px/10px "Liberation Sans", sans-serif; background: linear-gradient(transparent 30%, #ffe800 30%); margin-left: -4px; }

/* drawing side */
.stage { display: flex; flex-direction: column; min-width: 0; min-height: 0; }
.strip { flex: none; display: flex; align-items: center; height: 28px; }
.strip .bar { height: 26px; flex: none; }
.strip .bar.grow { flex: 1; min-width: 0; overflow: hidden; }
.strip .bar.stub { width: 28px; }
.fields { display: flex; align-items: center; gap: 8px; width: 342px; margin-left: -2px; }
.pick { appearance: none; flex: 1; height: 20px; padding: 0 1px; border: 0; background: #fff; }
.draw { display: flex; align-items: center; justify-content: space-between; width: 332px; margin-right: -1px; }
.offsets { height: 30px; justify-content: flex-end; gap: 3px; padding-right: 3px; color: #777; }
.offsets > button { color: #000; }
.offsets .wide { margin: 0 8px 0 6px; }
.offsets .dy { margin-left: 2px; }
.num { display: flex; align-items: center; width: 58px; height: 22px; padding-right: 4px; border: 1px solid #888; background: #f4f4f4; }
.num input { flex: 1; min-width: 0; padding: 0 12px 0 0; border: 0; background: none; text-align: right; }
.num.angle { width: 68px; }
.num svg { width: 6px; height: 18px; }
.check { display: flex; align-items: center; gap: 8px; padding: 0 1px 0 4px; color: #000; }
.check input { appearance: none; width: 11px; height: 11px; border: 1px solid #999; }
.canvas { flex: 1; min-height: 0; background: #000; }
.drawing { width: 100%; height: 100%; }
.bubble { fill: #d8d8d8; font: 700 14px "Liberation Sans", sans-serif; text-anchor: middle; }
.bubble .dim { fill: #777; }
.status { flex: none; display: flex; align-items: flex-start; gap: 2px; height: 12px; padding: 3px 4px 0; overflow: hidden; }
.status .tool { margin: 0 3px; }
.status .tool.on { margin: 0; padding: 0 2px; }
.status .on + .hold { margin: 0 2px 0 4px; }

/* floating windows */
.win { position: absolute; display: flex; flex-direction: column; font-family: "Noto Sans CJK SC", sans-serif; }
.win-title { display: flex; align-items: center; flex: none; background: #fff; }
.win-title h2 { flex: 1; }
.sheet { display: flex; min-height: 0; overflow: hidden; border: 1px solid #a8a8a8; background: #f0f0f0; }
.sheet table { flex: 1; table-layout: fixed; border-collapse: separate; border-spacing: 0; width: 0; }
.sheet th, .sheet td { height: 19px; padding: 0; border: solid #b4b4b4; border-width: 0 1px 1px 0; font-weight: 400; line-height: 16px; white-space: nowrap; overflow: hidden; text-align: left; }
.sheet thead th { height: 24px; text-align: center; background: linear-gradient(#fafafa, #ededed); }
.sheet thead .gold { color: #7c1030; background: linear-gradient(#f9d79c, #f0c06a); }
.sheet tbody th { font-family: "Liberation Sans", sans-serif; font-size: 11px; text-align: center; background: linear-gradient(90deg, #fafafa, #ececec); }
.sheet .current th { background: #ffd08a; color: #7c1030; }
.sheet td { background-color: #fff; padding-left: 2px; }
.sheet .key { color: #0000d0; }
.sheet .lat { font-family: "Liberation Mono", monospace; font-size: 11px; }
.sheet .group { color: #848484; }
.sheet .off td { color: #848484; }
.sheet .sub { background-image: linear-gradient(#a8a8a8, #a8a8a8), linear-gradient(#a8a8a8, #a8a8a8); background-repeat: no-repeat; background-size: 1px 100%, 17px 1px; background-position: 8px 0, 8px 9px; }
.sheet .sub.last { background-size: 1px 9px, 17px 1px; }
.box { display: inline-block; width: 13px; height: 13px; margin-right: 5px; border: 1px solid #999; background: #fff; color: #000; line-height: 10px; vertical-align: 0; }
.scroll { flex: none; display: flex; flex-direction: column; align-items: center; width: 19px; padding: 5px 0; background: #f0f0f0; }
.scroll svg { width: 10px; height: 10px; }
.scroll svg:last-child { margin-top: auto; }
.thumb { width: 15px; height: 95px; margin-top: 3px; background: #cdcdcd; }
.c-no { width: 22px; }

.props { left: 322px; top: 97px; width: 281px; height: 494px; box-shadow: 0 1px 8px rgba(0, 0, 0, .4); }
.props .win-title { height: 30px; padding: 0 1px 0 8px; }
.props h2 { color: #8c8c8c; }
.ghost { width: 18px; height: 19px; background: #e2e2e2; }
.props .c-name { width: 121px; }
.props td:nth-child(2) { padding-left: 20px; }
.props td.group { padding-left: 2px; }
.props td.sub { padding-left: 30px; }
.props .current .sub { background-color: #0078d7; color: #fff; }

.dialog { left: 406px; top: 138px; width: 554px; height: 440px; border: 1px solid #2484d4; background: #f0f0f0; box-shadow: 0 1px 10px rgba(0, 0, 0, .4); }
.dialog .win-title { height: 30px; padding: 0 17px 0 8px; }
.dialog .logo { width: 16px; height: 16px; margin-right: 5px; }
.dialog .win-title button { margin-left: 34px; }
.dialog .win-title button svg { width: 12px; height: 12px; }
.dialog .sheet { height: 314px; margin: 3px 3px 0; flex: none; }
.dialog .c-val { width: 103px; }
.dialog td:nth-child(2) { background-color: #ffffe1; }
.dialog td.group { padding-left: 3px; }
.dialog .box { margin-right: 4px; }
.dialog td.sub { padding-left: 30px; }
.dialog .current td:last-child { background: #d8e8f8; }
.hint { padding: 5px 3px; }
.actions { display: flex; justify-content: flex-end; gap: 15px; margin-top: auto; padding: 0 13px 8px; }
.actions button { width: 72px; height: 23px; border: 1px solid #a8a8a8; background: #e1e1e1; }
.actions .primary { border: 2px solid #1878c8; }

.ime { position: absolute; left: 973px; top: 22px; display: flex; align-items: center; gap: 6px; height: 23px; padding-right: 4px; border: 1px solid #c4ccd8; background: #fff; }
.ime svg { width: 16px; height: 16px; }
.ime .sogou { width: 28px; height: 26px; margin-top: -4px; }

.mini { position: absolute; left: 1311px; top: 24px; width: 53px; background: #fff; box-shadow: 0 1px 6px rgba(0, 0, 0, .5); font-family: "Noto Sans CJK SC", sans-serif; }
.mini-title { display: flex; align-items: center; justify-content: space-between; height: 26px; padding: 0 2px; color: #999; font-size: 13px; }
.mini-title i { width: 19px; height: 19px; background: #e6e6e6; }
.mini button { display: block; width: 100%; height: 23px; border: 1px solid #888; border-right: 2px solid #555; border-bottom: 2px solid #555; background: #f0f0f0; }
```
